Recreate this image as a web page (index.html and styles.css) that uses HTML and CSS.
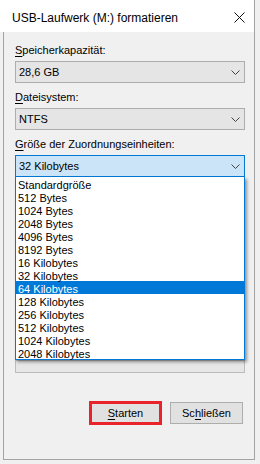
FILE: index.html
```html
<!DOCTYPE html>
<html lang="de">
<head>
<meta charset="utf-8">
<title>USB-Laufwerk (M:) formatieren</title>
<link rel="stylesheet" href="styles.css">
</head>
<body>
<div class="window">
  <div class="titlebar">
    <span class="title">USB-Laufwerk (M:) formatieren</span>
    <svg class="close" width="11" height="11" viewBox="0 0 11 11"><path d="M0.5 0.5 L10.5 10.5 M10.5 0.5 L0.5 10.5" stroke="#111" stroke-width="1" fill="none"/></svg>
  </div>
  <div class="client">
    <div class="field">
      <div class="label"><u>S</u>peicherkapazität:</div>
      <div class="combo"><span class="value">28,6 GB</span><svg class="chev" width="9" height="5" viewBox="0 0 9 5"><path d="M0.5 0.5 L4.5 4.5 L8.5 0.5" stroke="#444" fill="none"/></svg></div>
    </div>
    <div class="field">
      <div class="label"><u>D</u>ateisystem:</div>
      <div class="combo"><span class="value">NTFS</span><svg class="chev" width="9" height="5" viewBox="0 0 9 5"><path d="M0.5 0.5 L4.5 4.5 L8.5 0.5" stroke="#444" fill="none"/></svg></div>
    </div>
    <div class="field">
      <div class="label"><u>G</u>röße der Zuordnungseinheiten:</div>
      <div class="combo-wrap">
        <div class="combo focused"><span class="value">32 Kilobytes</span><svg class="chev" width="9" height="5" viewBox="0 0 9 5"><path d="M0.5 0.5 L4.5 4.5 L8.5 0.5" stroke="#444" fill="none"/></svg></div>
        <ul class="list">
          <li>Standardgröße</li>
          <li>512 Bytes</li>
          <li>1024 Bytes</li>
          <li>2048 Bytes</li>
          <li>4096 Bytes</li>
          <li>8192 Bytes</li>
          <li>16 Kilobytes</li>
          <li>32 Kilobytes</li>
          <li class="selected">64 Kilobytes</li>
          <li>128 Kilobytes</li>
          <li>256 Kilobytes</li>
          <li>512 Kilobytes</li>
          <li>1024 Kilobytes</li>
          <li>2048 Kilobytes</li>
        </ul>
      </div>
    </div>
    <div class="progress"></div>
    <div class="buttons">
      <button class="btn default marked"><u>S</u>tarten</button>
      <button class="btn">Sc<u>h</u>ließen</button>
    </div>
  </div>
</div>
</body>
</html>
```
FILE: styles.css
```css
html, body {
  margin: 0;
  padding: 0;
}
body {
  background: #f0f0f0;
  font-family: "Liberation Sans", Arial, sans-serif;
  font-size: 11px;
  color: #000;
  width: 260px;
  height: 464px;
  overflow: hidden;
}
u {
  text-decoration: underline;
  text-decoration-thickness: 1px;
  text-underline-offset: 2px;
}
.window {
  width: 255px;
}
.titlebar {
  box-sizing: border-box;
  height: 32px;
  background: #fff;
  border-right: 1px solid #a3a3a3;
  display: flex;
  align-items: flex-start;
  padding: 10px 9px 0 12px;
}
.title {
  font-size: 12px;
  line-height: 16px;
}
.close {
  margin-left: auto;
  margin-top: 2px;
  display: block;
}
.client {
  box-sizing: border-box;
  height: 428px;
  margin-left: 3px;
  border: 1px solid #a3a3a3;
  border-top: none;
  padding: 10px 9px 0 11px;
}
.field {
  margin-bottom: 6px;
}
.label {
  height: 15px;
  line-height: 17px;
  margin-bottom: 4px;
  white-space: nowrap;
}
.combo {
  box-sizing: border-box;
  height: 22px;
  background: #e5e5e5;
  border: 1px solid #adadad;
  display: flex;
  align-items: center;
  padding: 0 4px 0 3px;
  line-height: 20px;
}
.combo.focused {
  background: #cce4f7;
  border-color: #0078d7;
}
.value {
  flex: 1;
}
.chev {
  display: block;
}
.combo-wrap {
  position: relative;
}
.list {
  position: absolute;
  left: 0;
  right: 0;
  top: 100%;
  margin: 0;
  padding: 0;
  list-style: none;
  background: #fff;
  border: 1px solid #0078d7;
  border-top: none;
  box-shadow: 2px 2px 3px rgba(0, 0, 0, 0.4);
  z-index: 2;
}
.list li {
  height: 13px;
  line-height: 17px;
  padding-left: 2px;
  white-space: nowrap;
}
.list li.selected {
  background: #0078d7;
  color: #fff;
}
.progress {
  box-sizing: border-box;
  height: 13px;
  margin-top: 183px;
  background: #e6e6e6;
  border: 1px solid #bcbcbc;
}
.buttons {
  display: flex;
  justify-content: flex-end;
  gap: 8px;
  margin-top: 29px;
  padding-right: 2px;
}
.btn {
  position: relative;
  box-sizing: border-box;
  width: 73px;
  height: 22px;
  margin: 0;
  padding: 0;
  background: #e1e1e1;
  border: 1px solid #adadad;
  font-family: inherit;
  font-size: 11px;
  color: #000;
  line-height: 20px;
}
.btn.default {
  border-color: #0078d7;
  box-shadow: inset 0 0 0 1px #0078d7;
}
.btn.marked::after {
  content: "";
  position: absolute;
  left: -1px;
  right: -1px;
  top: -2px;
  bottom: -2px;
  border: 3px solid #e8232a;
}
```
